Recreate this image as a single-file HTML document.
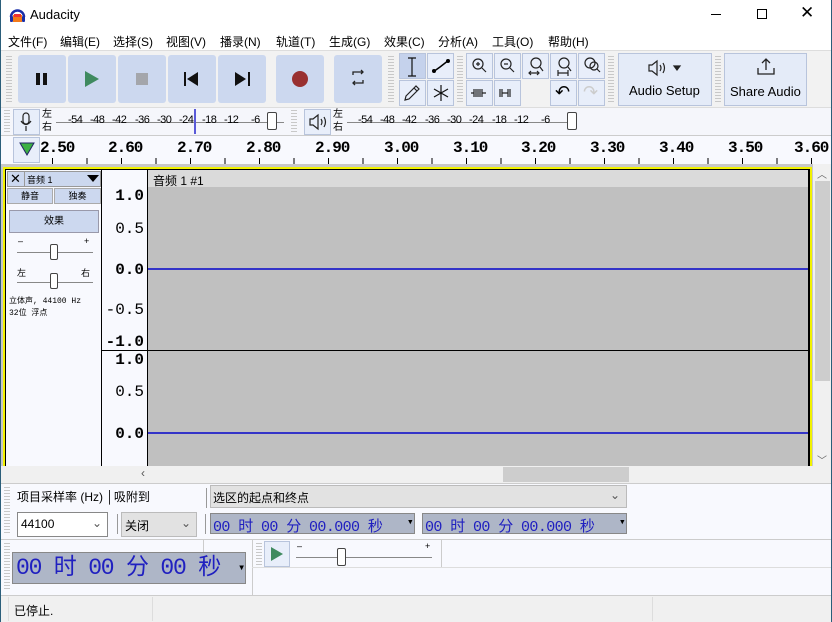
<!DOCTYPE html>
<html><head><meta charset="utf-8"><style>
*{margin:0;padding:0;box-sizing:border-box}
body{width:832px;height:622px;position:relative;overflow:hidden;background:#f0f0f0;font-family:"Liberation Sans","Noto Sans CJK SC",sans-serif;font-size:12px;color:#000}
.a{position:absolute}
.btn{position:absolute;background:#ccd8ef;border-radius:3px}
.tb{position:absolute;background:#ccd8ef;border:1px solid #b8c4dc}
.grip{position:absolute;width:6px;background:repeating-linear-gradient(#c8c8c8 0 1px,transparent 1px 3px)}
.mono{font-family:"Liberation Mono","Noto Sans CJK SC",monospace}
.tc{position:absolute;background:#aeb6c7;color:#2020c0;font-family:"Liberation Mono","Noto Sans CJK SC",monospace;overflow:hidden}
.m{position:absolute;top:33px;font-size:12px}
.r{position:absolute;top:139px;font-family:"Liberation Mono",monospace;font-size:16px;font-weight:bold;letter-spacing:-1px}
.mt{position:absolute;top:114px;font-size:11px;letter-spacing:-0.5px}
.zi{position:absolute}
</style></head><body>
<div class="a" style="left:0;top:0;width:832px;height:50px;background:#fff"></div>
<div class="a" style="left:0;top:0;width:1px;height:622px;background:#2b5e7a;z-index:9"></div>
<div class="a" style="left:831px;top:0;width:1px;height:622px;background:#2b5e7a;z-index:9"></div>
<svg class="a" style="left:9px;top:7px" width="17" height="16"><path d="M2 10 A6.5 6.5 0 0 1 15 10" fill="none" stroke="#1a2fa8" stroke-width="2.5"/><rect x="4" y="8" width="9" height="7" fill="#f27a1a"/><rect x="5" y="7" width="7" height="3" fill="#e33"/><rect x="1" y="9" width="3" height="6" rx="1" fill="#1a2fa8"/><rect x="13" y="9" width="3" height="6" rx="1" fill="#1a2fa8"/></svg>
<div class="a" style="left:30px;top:7px;font-size:13px">Audacity</div>
<div class="a" style="left:711px;top:14px;width:10px;height:1px;background:#000"></div>
<div class="a" style="left:757px;top:9px;width:10px;height:10px;border:1px solid #000"></div>
<div class="a" style="left:800px;top:3px;font-size:17px">✕</div>
<div class="m" style="left:8px">文件(F)</div><div class="m" style="left:60px">编辑(E)</div><div class="m" style="left:113px">选择(S)</div><div class="m" style="left:166px">视图(V)</div><div class="m" style="left:220px">播录(N)</div><div class="m" style="left:276px">轨道(T)</div><div class="m" style="left:329px">生成(G)</div><div class="m" style="left:384px">效果(C)</div><div class="m" style="left:438px">分析(A)</div><div class="m" style="left:492px">工具(O)</div><div class="m" style="left:548px">帮助(H)</div>
<!-- toolbars -->
<div class="a" style="left:1px;top:50px;width:830px;height:57px;background:#f2f2f2;border-top:1px solid #ddd"></div>
<div class="grip" style="left:6px;top:56px;height:46px"></div>
<div class="btn" style="left:18px;top:55px;width:48px;height:48px"></div>
<div class="btn" style="left:68px;top:55px;width:48px;height:48px"></div>
<div class="btn" style="left:118px;top:55px;width:48px;height:48px"></div>
<div class="btn" style="left:168px;top:55px;width:48px;height:48px"></div>
<div class="btn" style="left:218px;top:55px;width:48px;height:48px"></div>
<div class="btn" style="left:276px;top:55px;width:48px;height:48px"></div>
<div class="btn" style="left:334px;top:55px;width:48px;height:48px"></div>
<div class="a" style="left:36px;top:73px;width:4px;height:12px;background:#111"></div><div class="a" style="left:43px;top:73px;width:4px;height:12px;background:#111"></div>
<svg class="a" style="left:84px;top:71px" width="16" height="16"><path d="M1 0L15 8L1 16Z" fill="#3f8a5f"/></svg>
<div class="a" style="left:136px;top:73px;width:12px;height:12px;background:#a4a6ab"></div>
<svg class="a" style="left:184px;top:72px" width="16" height="14"><rect x="0" y="0" width="2" height="14" fill="#111"/><path d="M14 0L3 7L14 14Z" fill="#111"/></svg>
<svg class="a" style="left:234px;top:72px" width="16" height="14"><rect x="14" y="0" width="2" height="14" fill="#111"/><path d="M1 0L12 7L1 14Z" fill="#111"/></svg>
<div class="a" style="left:292px;top:71px;width:16px;height:16px;border-radius:50%;background:#993030"></div>
<svg class="a" style="left:350px;top:69px" width="16" height="18" fill="none" stroke="#222" stroke-width="1.3"><path d="M3 6V3H13"/><path d="M11 1L13 3L11 5"/><path d="M13 11V14H3"/><path d="M5 12L3 14L5 16"/></svg>
<div class="grip" style="left:388px;top:56px;height:46px"></div>
<div class="tb" style="left:399px;top:53px;width:27px;height:26px;background:#c5d2ec"></div>
<div class="tb" style="left:427px;top:53px;width:27px;height:26px;background:#e8eefa"></div>
<div class="tb" style="left:399px;top:80px;width:27px;height:26px;background:#e8eefa"></div>
<div class="tb" style="left:427px;top:80px;width:27px;height:26px;background:#e8eefa"></div>
<svg class="a" style="left:405px;top:57px" width="14" height="20" stroke="#111" stroke-width="1.2" fill="none"><path d="M3 1H11M3 19H11M7 1V19"/></svg>
<svg class="a" style="left:430px;top:57px" width="22" height="18"><path d="M3 15L10 10L19 3" stroke="#000" stroke-width="1.5" fill="none"/><circle cx="4" cy="14" r="2"/><circle cx="18" cy="4" r="2"/></svg>
<svg class="a" style="left:403px;top:84px" width="18" height="18" fill="none" stroke="#222" stroke-width="1.2"><path d="M2 16L3 12L13 2L16 5L6 15Z M11 4L14 7"/></svg>
<svg class="a" style="left:432px;top:84px" width="18" height="18" stroke="#111" stroke-width="1.2"><path d="M9 1V17M2 5L16 13M16 5L2 13"/></svg>
<div class="grip" style="left:457px;top:56px;height:46px"></div>
<div class="tb" style="left:466px;top:53px;width:27px;height:26px;background:#e8eefa"></div>
<div class="tb" style="left:494px;top:53px;width:27px;height:26px;background:#e8eefa"></div>
<div class="tb" style="left:522px;top:53px;width:27px;height:26px;background:#e8eefa"></div>
<div class="tb" style="left:550px;top:53px;width:27px;height:26px;background:#e8eefa"></div>
<div class="tb" style="left:578px;top:53px;width:27px;height:26px;background:#e8eefa"></div>
<div class="tb" style="left:466px;top:80px;width:27px;height:26px;background:#e8eefa"></div>
<div class="tb" style="left:494px;top:80px;width:27px;height:26px;background:#e8eefa"></div>
<div class="tb" style="left:550px;top:80px;width:27px;height:26px;background:#e8eefa"></div>
<div class="tb" style="left:578px;top:80px;width:27px;height:26px;background:#e8eefa"></div>
<svg class="a" style="left:471px;top:57px" width="130" height="20" fill="none" stroke="#222" stroke-width="1.2">
<circle cx="7" cy="7" r="5"/><path d="M11 11L15 15M5 7H9M7 5V9"/>
<circle cx="35" cy="7" r="5"/><path d="M39 11L43 15M33 7H37"/>
<circle cx="65" cy="6" r="5"/><path d="M69 10L72 14M58 16H68M60 14L58 16L60 18M66 14L68 16L66 18"/>
<circle cx="93" cy="6" r="5"/><path d="M97 10L100 14M87 16H97M87 13V19M97 13V19"/>
<circle cx="119" cy="6" r="5"/><circle cx="123" cy="9" r="4"/><path d="M126 12L129 15"/></svg>
<svg class="a" style="left:470px;top:86px" width="50" height="14" fill="none" stroke="#222" stroke-width="1.2"><path d="M1 7H4M4 3V11M6 3V11M8 3V11M10 3V11M12 3V11M12 7H16"/><path d="M30 3V11M32 3V11M32 7H38M38 3V11M40 3V11"/></svg>
<div class="a" style="left:555px;top:82px;font-size:18px">↶</div><div class="a" style="left:583px;top:82px;font-size:18px;color:#ccc">↷</div>
<div class="grip" style="left:608px;top:56px;height:46px"></div>
<div class="tb" style="left:618px;top:53px;width:94px;height:53px;background:#e4ebf8"></div>
<svg class="a" style="left:647px;top:59px" width="36" height="18" fill="none" stroke="#222" stroke-width="1.2"><path d="M2 6H5L10 2V16L5 12H2Z M13 6Q15 9 13 12 M16 4Q19 9 16 14"/><path d="M27 7H33L30 11Z" fill="#222"/></svg>
<div class="a" style="left:629px;top:83px;font-size:13px">Audio Setup</div>
<div class="grip" style="left:715px;top:56px;height:46px"></div>
<div class="tb" style="left:724px;top:53px;width:83px;height:53px;background:#e4ebf8"></div>
<svg class="a" style="left:756px;top:57px" width="20" height="20" fill="none" stroke="#222" stroke-width="1.3"><path d="M10 2V13M6 6L10 2L14 6M2 11V17H18V11"/></svg>
<div class="a" style="left:730px;top:84px;font-size:13px">Share Audio</div>
<!-- meters -->
<div class="a" style="left:1px;top:107px;width:830px;height:29px;background:#f5f6fb;border-top:1px solid #ddd;border-bottom:1px solid #ccc"></div>
<div class="grip" style="left:4px;top:110px;height:22px"></div>
<div class="tb" style="left:13px;top:109px;width:27px;height:26px;background:#e8eefa"></div>
<svg class="a" style="left:20px;top:112px" width="12" height="20" fill="none" stroke="#222" stroke-width="1.2"><rect x="3" y="1" width="6" height="11" rx="3"/><path d="M1 9Q6 16 11 9M6 14V19"/></svg>
<div class="a" style="left:42px;top:108px;font-size:10px;line-height:13px">左<br>右</div>
<div class="a" style="left:56px;top:122px;width:228px;height:1px;background:#888"></div>
<div class="mt" style="left:68px">-54</div><div class="mt" style="left:90px">-48</div><div class="mt" style="left:112px">-42</div><div class="mt" style="left:135px">-36</div><div class="mt" style="left:157px">-30</div><div class="mt" style="left:179px">-24</div><div class="mt" style="left:202px">-18</div><div class="mt" style="left:224px">-12</div><div class="mt" style="left:251px">-6</div>
<div class="a" style="left:194px;top:109px;width:2px;height:25px;background:#5a5ad8"></div>
<div class="a" style="left:267px;top:112px;width:10px;height:18px;background:#fff;border:1px solid #444;border-radius:2px"></div>
<div class="grip" style="left:291px;top:110px;height:22px"></div>
<div class="tb" style="left:304px;top:109px;width:27px;height:26px;background:#e8eefa"></div>
<svg class="a" style="left:308px;top:113px" width="20" height="18" fill="none" stroke="#222" stroke-width="1.2"><path d="M2 6H5L10 2V16L5 12H2Z M13 6Q15 9 13 12 M16 4Q19 9 16 14"/></svg>
<div class="a" style="left:333px;top:108px;font-size:10px;line-height:13px">左<br>右</div>
<div class="a" style="left:347px;top:122px;width:230px;height:1px;background:#888"></div>
<div class="mt" style="left:358px">-54</div><div class="mt" style="left:380px">-48</div><div class="mt" style="left:402px">-42</div><div class="mt" style="left:425px">-36</div><div class="mt" style="left:447px">-30</div><div class="mt" style="left:469px">-24</div><div class="mt" style="left:492px">-18</div><div class="mt" style="left:514px">-12</div><div class="mt" style="left:541px">-6</div>
<div class="a" style="left:567px;top:112px;width:10px;height:18px;background:#fff;border:1px solid #444;border-radius:2px"></div>
<!-- ruler -->
<div class="a" style="left:1px;top:136px;width:830px;height:28px;background:#f8f9fe"></div>
<div class="tb" style="left:13px;top:137px;width:27px;height:26px;background:#e8eefa"></div>
<svg class="a" style="left:19px;top:142px" width="16" height="14"><path d="M1 1H15L8 13Z" fill="#3cb043" stroke="#226"/></svg>
<div class="r" style="left:40px">2.50</div><div class="r" style="left:108px">2.60</div><div class="r" style="left:177px">2.70</div><div class="r" style="left:246px">2.80</div><div class="r" style="left:315px">2.90</div><div class="r" style="left:384px">3.00</div><div class="r" style="left:453px">3.10</div><div class="r" style="left:521px">3.20</div><div class="r" style="left:590px">3.30</div><div class="r" style="left:659px">3.40</div><div class="r" style="left:728px">3.50</div><div class="r" style="left:794px">3.60</div>
<div class="a" style="left:52px;top:158px;width:778px;height:6px;background:repeating-linear-gradient(90deg,#000 0 1px,transparent 1px 34.5px)"></div>
<!-- track area -->
<div class="a" style="left:1px;top:164px;width:812px;height:302px;background:#c8c8c8"></div>
<div class="a" style="left:3px;top:167px;width:809px;height:299px;border:2px solid #f2f200;border-bottom:none"></div>
<div class="a" style="left:5px;top:169px;width:805px;height:297px;border:1px solid #000;border-bottom:none;background:#f8f9fe"></div>
<div class="a" style="left:101px;top:170px;width:1px;height:296px;background:#000"></div>
<div class="a" style="left:7px;top:171px;width:94px;height:16px;background:#ccd8ef;border:1px solid #999"></div>
<div class="a" style="left:10px;top:171px;font-size:13px">✕</div>
<div class="a" style="left:24px;top:171px;width:1px;height:16px;background:#999"></div>
<div class="a" style="left:27px;top:173px;font-size:9px">音频 1</div>
<svg class="a" style="left:87px;top:175px" width="12" height="7"><path d="M0 0H12L6 7Z"/></svg>
<div class="a" style="left:7px;top:188px;width:46px;height:16px;background:#ccd8ef;border:1px solid #aaa;font-size:9px;text-align:center;line-height:14px">静音</div>
<div class="a" style="left:54px;top:188px;width:47px;height:16px;background:#ccd8ef;border:1px solid #aaa;font-size:9px;text-align:center;line-height:14px">独奏</div>
<div class="a" style="left:9px;top:210px;width:90px;height:23px;background:#ccd8ef;border:1px solid #99a;font-size:10px;text-align:center;line-height:21px">效果</div>
<div class="a" style="left:18px;top:236px;font-size:9px">–</div><div class="a" style="left:84px;top:236px;font-size:9px">+</div>
<div class="a" style="left:17px;top:252px;width:76px;height:1px;background:#888"></div>
<div class="a" style="left:50px;top:244px;width:8px;height:16px;background:#fff;border:1px solid #444;border-radius:2px"></div>
<div class="a" style="left:17px;top:266px;font-size:9px">左</div><div class="a" style="left:81px;top:266px;font-size:9px">右</div>
<div class="a" style="left:17px;top:282px;width:76px;height:1px;background:#888"></div>
<div class="a" style="left:50px;top:273px;width:8px;height:16px;background:#fff;border:1px solid #444;border-radius:2px"></div>
<div class="a mono" style="left:9px;top:296px;font-size:8px;line-height:12px">立体声, 44100 Hz<br>32位 浮点</div>
<div class="a mono" style="left:100px;top:188px;width:44px;font-size:16px;text-align:right;line-height:1;font-weight:bold">1.0</div>
<div class="a mono" style="left:100px;top:221px;width:44px;font-size:16px;text-align:right;line-height:1">0.5</div>
<div class="a mono" style="left:100px;top:262px;width:44px;font-size:16px;text-align:right;line-height:1;font-weight:bold">0.0</div>
<div class="a mono" style="left:100px;top:302px;width:44px;font-size:16px;text-align:right;line-height:1">-0.5</div>
<div class="a mono" style="left:100px;top:334px;width:44px;font-size:16px;text-align:right;line-height:1;font-weight:bold">-1.0</div>
<div class="a mono" style="left:100px;top:352px;width:44px;font-size:16px;text-align:right;line-height:1;font-weight:bold">1.0</div>
<div class="a mono" style="left:100px;top:384px;width:44px;font-size:16px;text-align:right;line-height:1">0.5</div>
<div class="a mono" style="left:100px;top:426px;width:44px;font-size:16px;text-align:right;line-height:1;font-weight:bold">0.0</div>
<div class="a" style="left:147px;top:170px;width:661px;height:296px;background:#c0c0c0"></div>
<div class="a" style="left:147px;top:170px;width:661px;height:17px;background:#dadada"></div>
<div class="a" style="left:153px;top:172px;font-size:12px" >音频 1 #1</div>
<div class="a" style="left:147px;top:170px;width:1px;height:296px;background:#000"></div>
<div class="a" style="left:808px;top:170px;width:1px;height:296px;background:#000"></div>
<div class="a" style="left:102px;top:350px;width:706px;height:1px;background:#000"></div>
<div class="a" style="left:148px;top:268px;width:660px;height:2px;background:#3434c8"></div>
<div class="a" style="left:148px;top:432px;width:660px;height:2px;background:#3434c8"></div>
<!-- v scrollbar -->
<div class="a" style="left:813px;top:164px;width:18px;height:302px;background:#f0f0f0"></div>
<div class="a" style="left:815px;top:181px;width:15px;height:200px;background:#cdcdcd"></div>
<div class="a" style="left:817px;top:166px;font-size:10px;color:#666">︿</div>
<div class="a" style="left:817px;top:452px;font-size:10px;color:#666">﹀</div>
<!-- h scrollbar -->
<div class="a" style="left:1px;top:466px;width:830px;height:17px;background:#f0f0f0"></div>
<div class="a" style="left:503px;top:467px;width:126px;height:15px;background:#cdcdcd"></div>
<div class="a" style="left:141px;top:466px;font-size:12px;color:#555">‹</div>
<!-- selection bar -->
<div class="a" style="left:1px;top:483px;width:830px;height:112px;background:#f8f9fe;border-top:1px solid #ccc"></div>
<div class="grip" style="left:4px;top:487px;height:48px"></div>
<div class="a" style="left:17px;top:488px;font-size:12px">项目采样率 (Hz) │吸附到</div>
<div class="a" style="left:206px;top:488px;width:1px;height:20px;background:#999"></div>
<div class="a" style="left:210px;top:485px;width:417px;height:23px;background:#e2e2e2;border:1px solid #bbb;font-size:12px;padding:3px 2px">选区的起点和终点<span style="position:absolute;right:6px;top:2px;color:#555">⌄</span></div>
<div class="a" style="left:17px;top:512px;width:91px;height:25px;background:#fff;border:1px solid #888;font-size:12px;padding:4px 3px">44100<span style="position:absolute;right:5px;top:3px;color:#555">⌄</span></div>
<div class="a" style="left:117px;top:514px;width:1px;height:20px;background:#999"></div>
<div class="a" style="left:121px;top:512px;width:76px;height:25px;background:#e2e2e2;border:1px solid #bbb;font-size:12px;padding:4px 3px">关闭<span style="position:absolute;right:5px;top:3px;color:#555">⌄</span></div>
<div class="a" style="left:205px;top:514px;width:1px;height:20px;background:#999"></div>
<div class="tc" style="left:210px;top:513px;width:205px;height:21px;font-size:15px;padding:1px 2px;white-space:pre;border:1px solid #888;letter-spacing:-0.6px">00 时 00 分 00.000 秒<span style="position:absolute;right:1px;top:1px;color:#000;font-size:11px">▾</span></div>
<div class="tc" style="left:422px;top:513px;width:205px;height:21px;font-size:15px;padding:1px 2px;white-space:pre;border:1px solid #888;letter-spacing:-0.6px">00 时 00 分 00.000 秒<span style="position:absolute;right:1px;top:1px;color:#000;font-size:11px">▾</span></div>
<div class="a" style="left:1px;top:539px;width:830px;height:1px;background:#ccc"></div>
<div class="grip" style="left:4px;top:543px;height:48px"></div>
<div class="tc" style="left:12px;top:552px;width:234px;height:32px;font-size:23px;padding:0 3px;white-space:pre;border:1px solid #888;line-height:30px;letter-spacing:-1.2px">00 时 00 分 00 秒<span style="position:absolute;right:1px;top:0;font-size:12px;color:#000">▾</span></div>
<div class="a" style="left:203px;top:540px;width:1px;height:12px;background:#ccc"></div>
<div class="a" style="left:252px;top:540px;width:1px;height:55px;background:#ccc"></div>
<div class="a" style="left:252px;top:567px;width:579px;height:1px;background:#ddd"></div>
<div class="grip" style="left:256px;top:543px;height:22px"></div>
<div class="tb" style="left:264px;top:541px;width:26px;height:26px;background:#e8eefa"></div>
<svg class="a" style="left:270px;top:546px" width="14" height="16"><path d="M1 1L13 8L1 15Z" fill="#3f8a5f"/></svg>
<div class="a" style="left:297px;top:541px;font-size:9px">–</div><div class="a" style="left:425px;top:541px;font-size:9px">+</div>
<div class="a" style="left:296px;top:557px;width:136px;height:1px;background:#888"></div>
<div class="a" style="left:337px;top:548px;width:9px;height:18px;background:#fff;border:1px solid #444;border-radius:2px"></div>
<div class="a" style="left:441px;top:540px;width:1px;height:27px;background:#ccc"></div>
<!-- status -->
<div class="a" style="left:1px;top:595px;width:830px;height:27px;background:#f0f0f0;border-top:1px solid #ccc"></div>
<div class="a" style="left:8px;top:597px;width:1px;height:24px;background:#ddd"></div>
<div class="a" style="left:152px;top:597px;width:1px;height:24px;background:#ddd"></div>
<div class="a" style="left:652px;top:597px;width:1px;height:24px;background:#ddd"></div>
<div class="a" style="left:14px;top:602px;font-size:12px">已停止.</div>
</body></html>
